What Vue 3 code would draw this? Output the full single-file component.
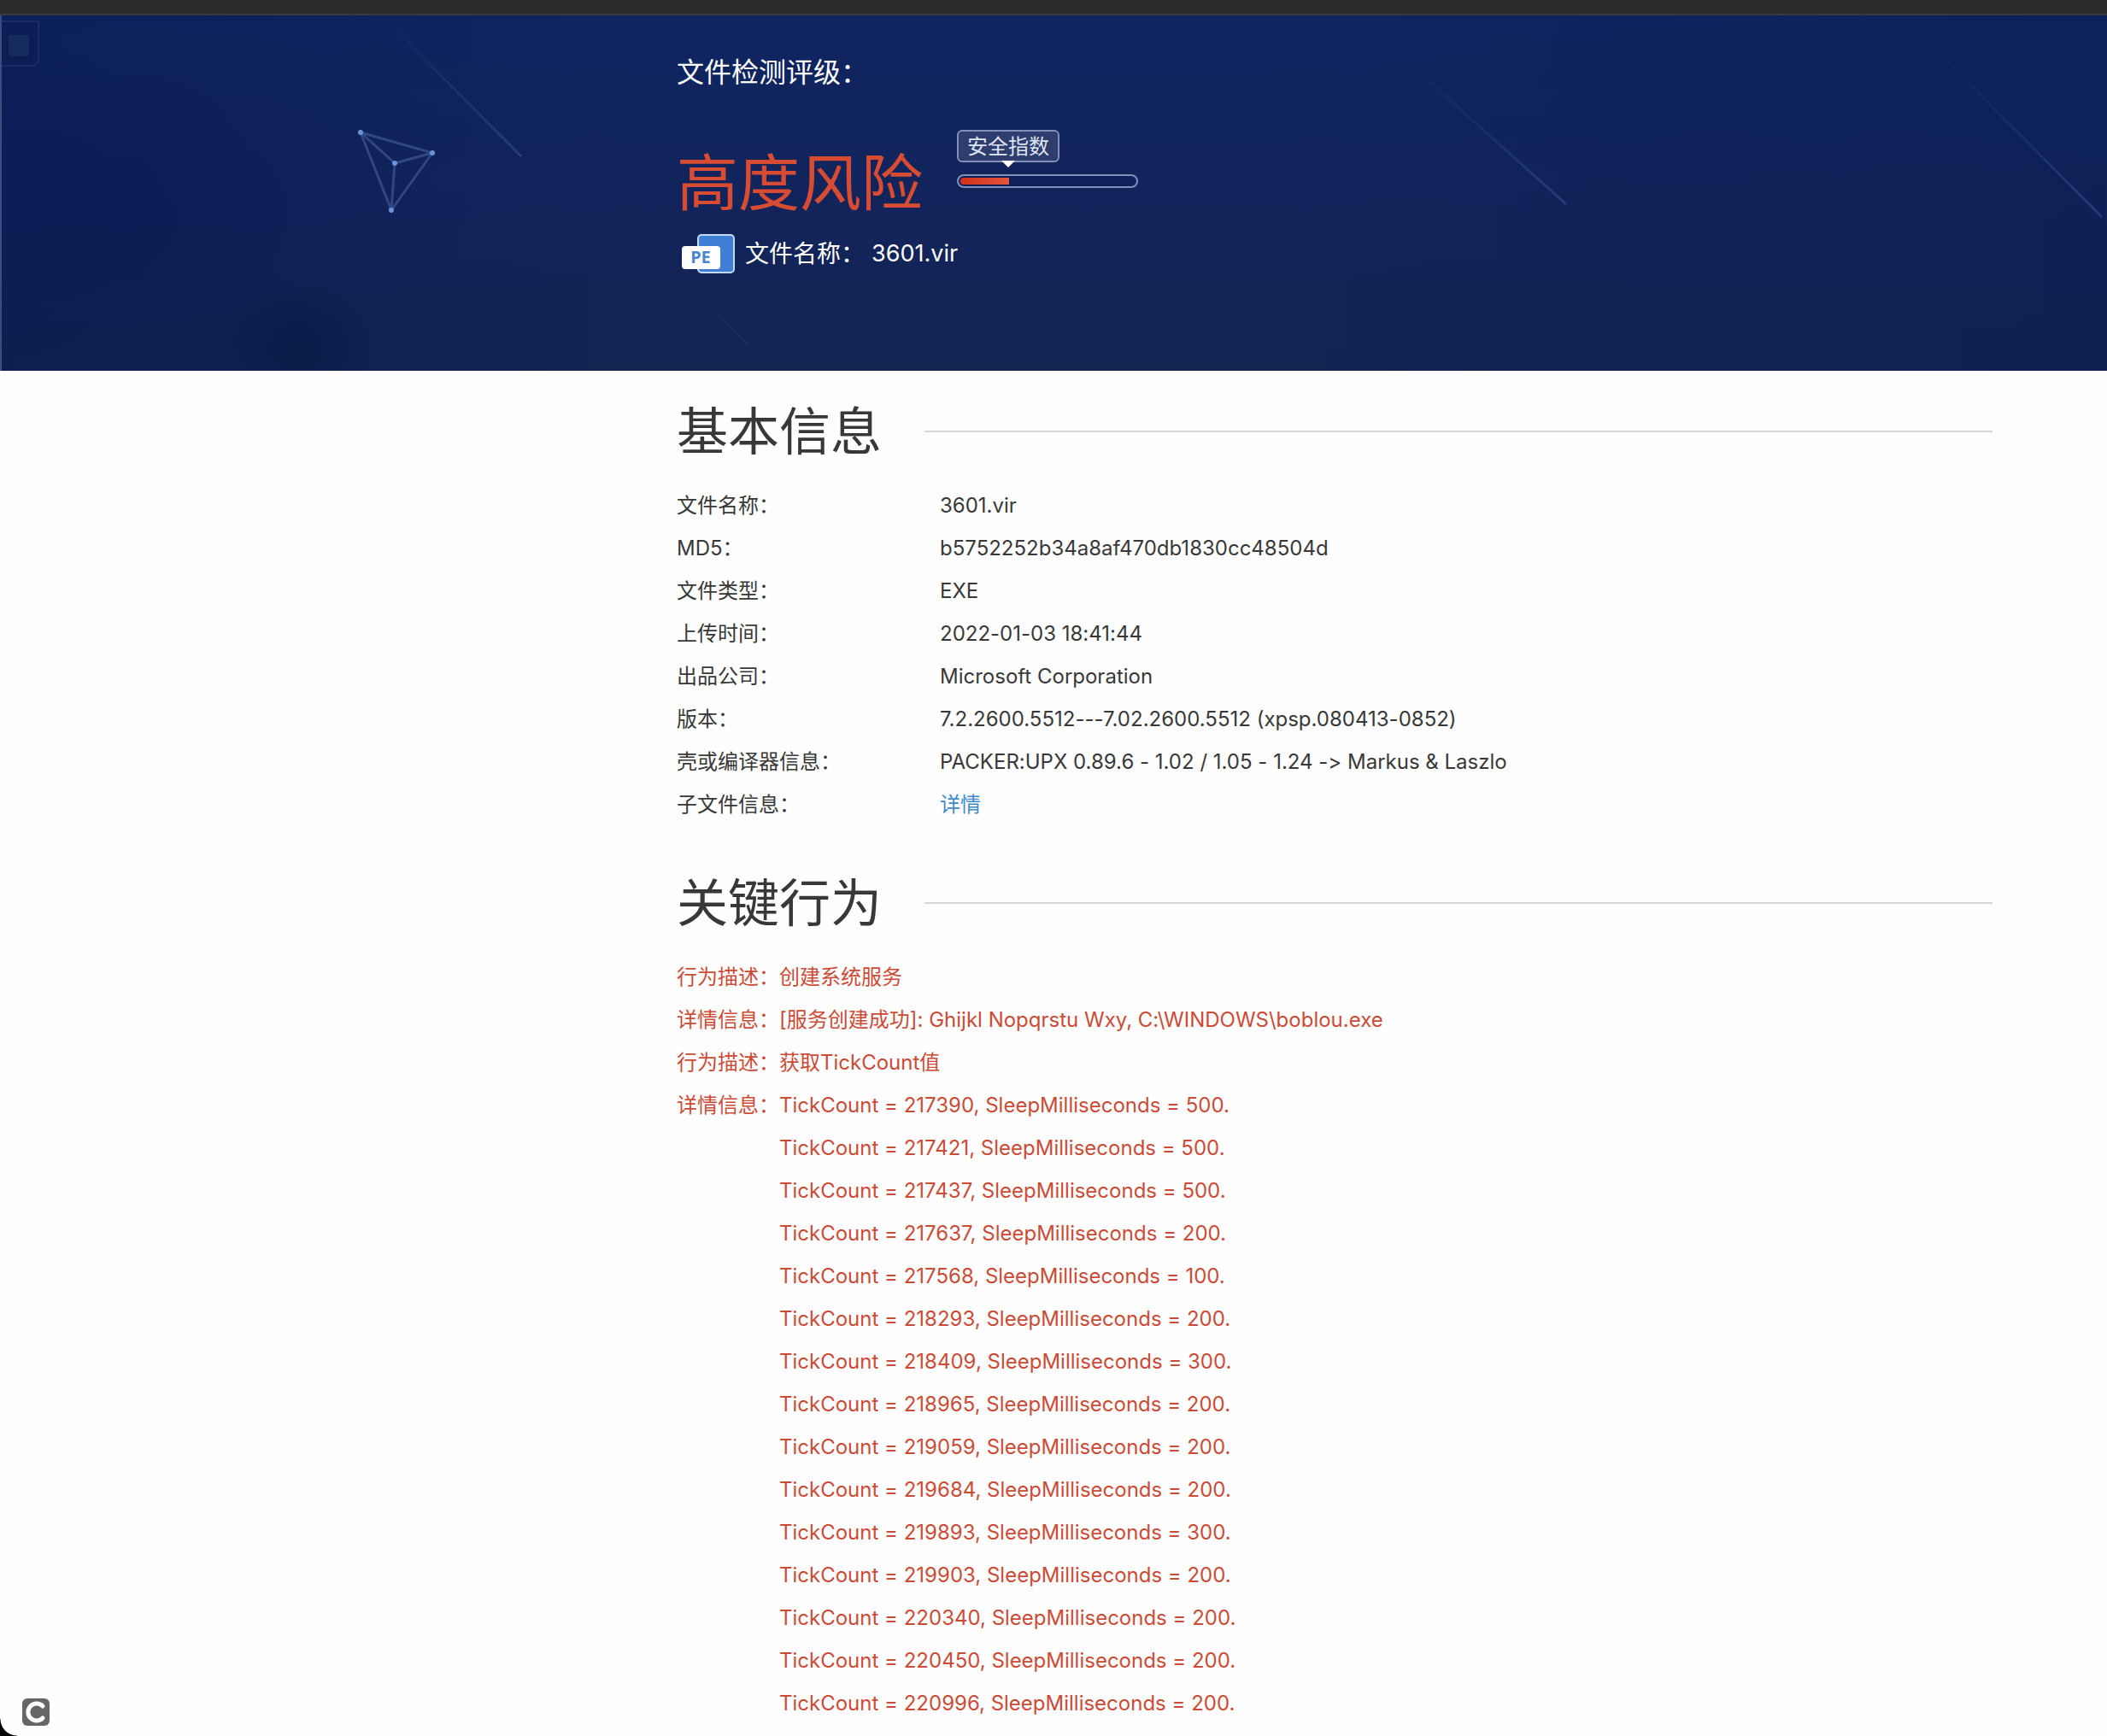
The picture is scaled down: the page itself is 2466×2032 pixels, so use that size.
<script setup>
const info = [
  { label: '文件名称：', value: '3601.vir' },
  { label: 'MD5：', value: 'b5752252b34a8af470db1830cc48504d' },
  { label: '文件类型：', value: 'EXE' },
  { label: '上传时间：', value: '2022-01-03 18:41:44' },
  { label: '出品公司：', value: 'Microsoft Corporation' },
  { label: '版本：', value: '7.2.2600.5512---7.02.2600.5512 (xpsp.080413-0852)' },
  { label: '壳或编译器信息：', value: 'PACKER:UPX 0.89.6 - 1.02 / 1.05 - 1.24 -> Markus & Laszlo' },
  { label: '子文件信息：', value: '详情', link: true },
]

const ticks = [
  [217390, 500], [217421, 500], [217437, 500], [217637, 200], [217568, 100],
  [218293, 200], [218409, 300], [218965, 200], [219059, 200], [219684, 200],
  [219893, 300], [219903, 200], [220340, 200], [220450, 200], [220996, 200],
]

const score = 28
</script>

<template>
  <div class="page" lang="zh-CN">
    <div class="topbar"></div>

    <header class="hero">
      <svg class="sky" viewBox="0 0 2466 416" preserveAspectRatio="xMinYMin slice" aria-hidden="true">
        <defs>
          <linearGradient id="trail" x1="0" y1="0" x2="1" y2="1">
            <stop offset="0" stop-color="#4a6ca8" stop-opacity="0" />
            <stop offset="1" stop-color="#5478b4" stop-opacity="0.32" />
          </linearGradient>
        </defs>
        <path d="M0 7H45V54L40 59H0" fill="#0b1c50" fill-opacity="0.5" stroke="#1c2c64" stroke-width="2" />
        <rect x="10" y="23" width="24" height="25" rx="3" fill="#162b60" />
        <g fill="none" stroke="url(#trail)" stroke-width="3">
          <path d="M448 2L610 165" />
          <path d="M1650 57L1833 221" />
          <path d="M2270 45L2460 236" />
          <path d="M818 328L875 385" stroke-width="2" stroke-opacity="0.5" />
        </g>
        <g fill="none" stroke="#31477f" stroke-width="3" stroke-linejoin="round">
          <path d="M422 137L506 161L458 228Z" />
          <path d="M422 137L462 173L506 161M462 173L458 228" />
        </g>
        <g fill="#6d93d8">
          <circle cx="422" cy="137" r="3" />
          <circle cx="506" cy="161" r="3" />
          <circle cx="462" cy="173" r="3" />
          <circle cx="458" cy="228" r="3" />
        </g>
        <rect width="2" height="416" fill="#3a4d7c" />
      </svg>

      <div class="content hero-body">
        <p class="hero-title">文件检测评级：</p>
        <div class="rating">
          <h1 class="level">高度风险</h1>
          <div class="gauge">
            <span class="gauge-label">安全指数</span>
            <div class="track"><div class="fill" :style="{ width: score + '%' }"></div></div>
          </div>
        </div>
        <div class="file">
          <svg class="file-icon" width="64" height="48" viewBox="0 0 64 48" aria-hidden="true">
            <rect x="19" y="2" width="42" height="44" rx="4" fill="#3f80d6" stroke="#c3d8f5" stroke-width="2" />
            <rect x="0" y="15" width="45" height="27" rx="4" fill="#fff" />
            <text x="22" y="35" text-anchor="middle" class="pe">PE</text>
          </svg>
          <span>文件名称：</span>
          <span class="file-name">3601.vir</span>
        </div>
      </div>
    </header>

    <main class="content">
      <section>
        <h2>基本信息</h2>
        <dl class="info">
          <div v-for="row in info" :key="row.label" class="row">
            <dt>{{ row.label }}</dt>
            <dd v-if="row.link"><a href="#">{{ row.value }}</a></dd>
            <dd v-else>{{ row.value }}</dd>
          </div>
        </dl>
      </section>

      <section>
        <h2>关键行为</h2>
        <dl class="behavior">
          <div class="row">
            <dt>行为描述：</dt>
            <dd>创建系统服务</dd>
          </div>
          <div class="row">
            <dt>详情信息：</dt>
            <dd>[服务创建成功]: Ghijkl Nopqrstu Wxy, C:\WINDOWS\boblou.exe</dd>
          </div>
          <div class="row">
            <dt>行为描述：</dt>
            <dd>获取TickCount值</dd>
          </div>
          <div class="row">
            <dt>详情信息：</dt>
            <dd>
              <div v-for="[count, sleep] in ticks" :key="count">TickCount = {{ count }}, SleepMilliseconds = {{ sleep }}.</div>
            </dd>
          </div>
        </dl>
      </section>
    </main>

    <svg class="mark" width="32" height="32" viewBox="0 0 32 32" aria-hidden="true">
      <rect width="32" height="32" rx="6" fill="#666" />
      <path d="M24 9A10 10 0 1 0 24 23" fill="none" stroke="#fff" stroke-width="5" stroke-linecap="round" />
    </svg>
    <div class="corner"></div>
  </div>
</template>

<style>
body {
  margin: 0;
  background: #fefefe;
}
</style>

<style scoped>
.page {
  min-height: 100vh;
  font-family: Inter, "Noto Sans CJK SC", sans-serif;
  font-size: 24px;
  line-height: 50px;
  color: #383838;
  font-variant-ligatures: none;
}
.topbar {
  box-sizing: border-box;
  height: 18px;
  background: #2b2b2b;
  border-bottom: 2px solid #3a3a3e;
}
.content {
  padding: 0 134px 0 792px;
}
.hero {
  position: relative;
  background:
    radial-gradient(ellipse 100px 80px at 350px 390px, rgba(4, 22, 62, 0.5), transparent),
    radial-gradient(ellipse 360px 200px at 120px 230px, rgba(8, 22, 80, 0.3), transparent),
    linear-gradient(90deg, rgba(6, 24, 80, 0.4), transparent 30%, transparent 60%, rgba(6, 28, 80, 0.4)),
    linear-gradient(#0f2560, #12245a 60%, #122450);
}
.sky {
  position: absolute;
  inset: 0;
  width: 100%;
  height: 100%;
}
.hero-body {
  position: relative;
  box-sizing: border-box;
  min-height: 416px;
  padding-top: 42px;
  color: #fff;
}
.hero-title {
  margin: 0;
  font-size: 32px;
}
.rating {
  display: flex;
  align-items: flex-start;
  gap: 40px;
  height: 120px;
  margin-top: 42px;
}
.level {
  margin: 0;
  font-size: 72px;
  line-height: 124px;
  font-weight: 400;
  color: #d94c34;
}
.gauge {
  width: 212px;
}
.gauge-label {
  position: relative;
  display: block;
  box-sizing: border-box;
  width: 120px;
  height: 38px;
  border: 2px solid #8090b8;
  border-radius: 6px;
  background: #2e3c6e;
  color: #dfe5f2;
  line-height: 36px;
  text-align: center;
}
.gauge-label::after {
  content: "";
  position: absolute;
  left: 50%;
  top: 100%;
  margin-left: -8px;
  border: 8px solid transparent;
  border-top-color: #fff;
  border-bottom: 0;
}
.track {
  box-sizing: border-box;
  height: 16px;
  margin-top: 14px;
  padding: 2px;
  border: 2px solid #8090b8;
  border-radius: 8px;
  background: #10205a;
}
.fill {
  height: 100%;
  border-radius: 4px 0 0 4px;
  background: linear-gradient(90deg, #d2301a, #e4553c);
}
.file {
  display: flex;
  align-items: center;
  font-size: 28px;
}
.file-icon {
  margin: 0 10px 0 6px;
}
.pe {
  font: 700 20px "Noto Sans", sans-serif;
  fill: #4a86cf;
}
.file-name {
  margin-left: 8px;
  font-size: 27px;
}
section {
  padding-top: 29px;
}
section + section {
  padding-top: 48px;
}
h2 {
  display: flex;
  align-items: center;
  gap: 50px;
  margin: 0 0 20px;
  font-size: 60px;
  line-height: 84px;
  font-weight: 400;
}
h2::after {
  content: "";
  flex: 1;
  height: 2px;
  background: #d6d6d6;
}
dl,
dd {
  margin: 0;
}
.row {
  display: flex;
}
.info dt {
  width: 20%;
}
.behavior {
  color: #cb4b37;
}
.behavior dt {
  width: 120px;
}
a {
  color: #3e8acb;
  text-decoration: none;
}
.mark {
  position: fixed;
  left: 26px;
  bottom: 12px;
}
.corner {
  position: fixed;
  left: 0;
  bottom: 0;
  width: 20px;
  height: 20px;
  background: radial-gradient(circle at 100% 0, transparent 19px, #000 20px);
}
</style>
